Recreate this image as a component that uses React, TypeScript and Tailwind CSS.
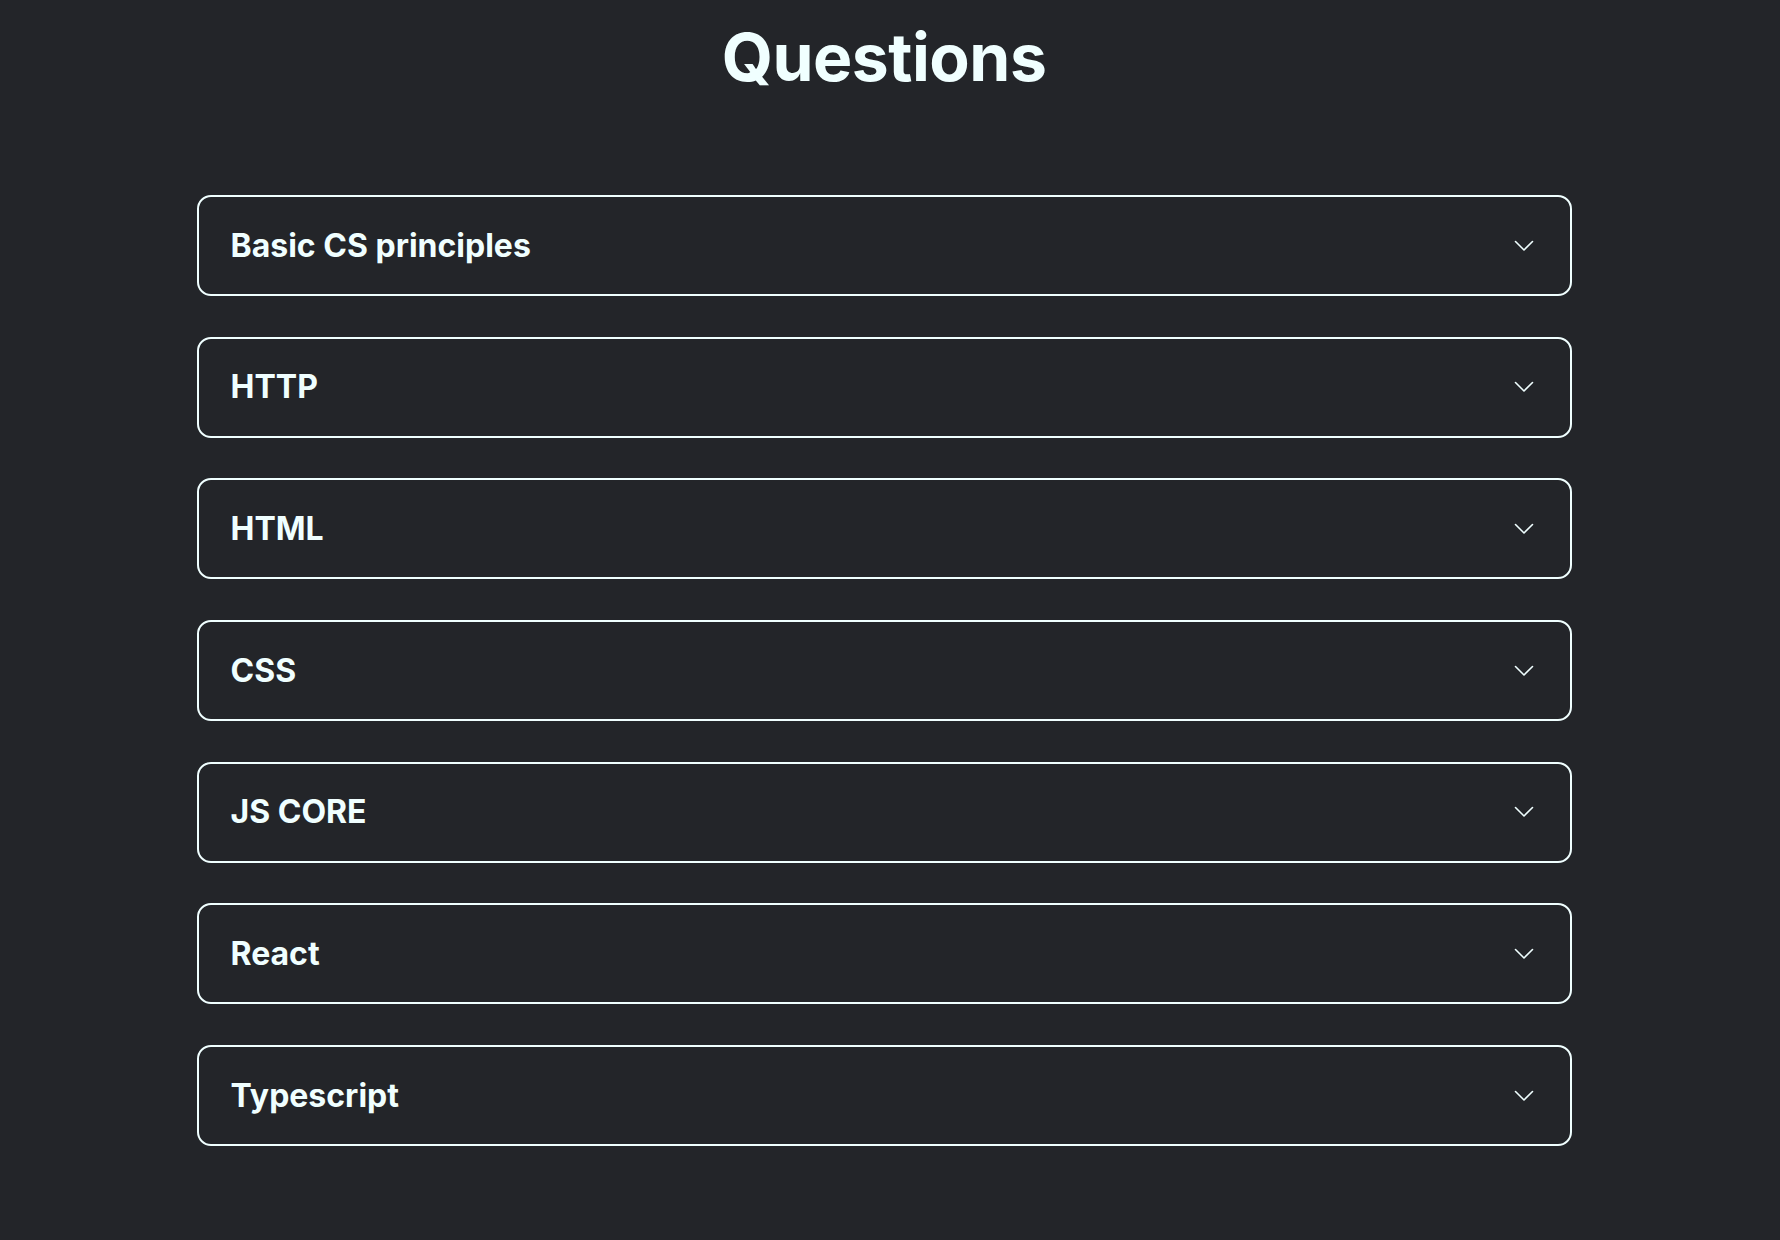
import React from "react";

const items = ["Basic CS principles", "HTTP", "HTML", "CSS", "JS CORE", "React", "Typescript"];

function Chevron() {
  return (
    <svg width="20" height="12" viewBox="0 0 20 12" fill="none">
      <polyline points="1.5,1.5 10,10 18.5,1.5" stroke="#f0ffff" strokeWidth="1.6" strokeLinecap="round" strokeLinejoin="round" />
    </svg>
  );
}

export default function App() {
  return (
    <div className="h-[1240px] w-full overflow-hidden bg-[#232529] text-[#f0ffff] pr-[12px]" style={{ fontFamily: "Inter, 'Noto Sans', sans-serif" }}>
      <h1 className="text-center text-[66px] font-bold leading-[80px] pt-[17px] tracking-[-0.5px]">Questions</h1>
      <div className="mx-auto mt-[98px] flex w-[1375px] flex-col gap-[40.7px]">
        {items.map((t) => (
          <button
            key={t}
            className="flex h-[101px] w-full items-center justify-between rounded-[14px] border-2 border-[#f0ffff] pl-[32px] pr-[36px] text-left"
          >
            <span className="text-[32px] font-bold leading-none">{t}</span>
            <Chevron />
          </button>
        ))}
      </div>
    </div>
  );
}
